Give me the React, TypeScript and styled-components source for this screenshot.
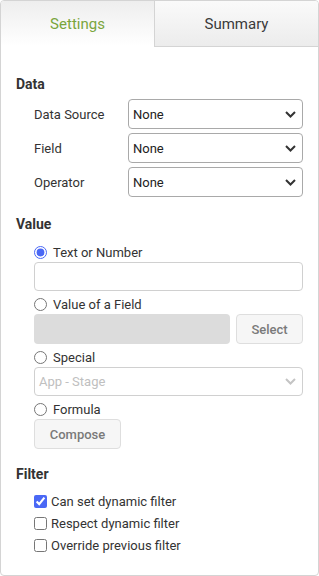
import React from 'react'
import styled, { createGlobalStyle } from 'styled-components'

const GlobalStyle = createGlobalStyle`
  body {
    margin: 0;
    background: #ffffff;
    font-family: Roboto, "Liberation Sans", Arial, sans-serif;
    color: #333;
  }
`

const Panel = styled.div`
  width: 319px;
  height: 576px;
  box-sizing: border-box;
  border: 1px solid #d4d4d4;
  border-radius: 4px;
  overflow: hidden;
  background: #fff;
`

const Tabs = styled.div`
  display: flex;
  height: 45px;
`

const Tab = styled.div<{ active?: boolean }>`
  flex: ${(p) => (p.active ? '0 0 153px' : '1')};
  display: flex;
  align-items: center;
  justify-content: center;
  font-size: 15px;
  color: ${(p) => (p.active ? '#7aa53c' : '#3a3a3a')};
  background: ${(p) =>
    p.active
      ? 'linear-gradient(#eeeeee, #ffffff)'
      : 'linear-gradient(#fafafa, #ececec)'};
  border-bottom: ${(p) => (p.active ? 'none' : '1px solid #d4d4d4')};
  border-left: ${(p) => (p.active ? 'none' : '1px solid #d4d4d4')};
  box-sizing: border-box;
  height: ${(p) => (p.active ? '45px' : '46px')};
`

const Content = styled.div`
  padding: 29px 15px 0 15px;
`

const Section = styled.div<{ after: number }>`
  margin-bottom: ${(p) => p.after}px;
`

const Heading = styled.div`
  font-size: 14px;
  font-weight: 700;
  line-height: 18px;
  color: #333;
`

const Rows = styled.div<{ gap: number; top: number }>`
  display: flex;
  flex-direction: column;
  gap: ${(p) => p.gap}px;
  padding-left: 18px;
  margin-top: ${(p) => p.top}px;
`

const FieldRow = styled.div`
  display: grid;
  grid-template-columns: 94px 1fr;
  align-items: center;
`

const Label = styled.span`
  font-size: 13px;
  color: #333;
`

const SelectBox = styled.div<{ disabled?: boolean; h?: number }>`
  height: ${(p) => p.h ?? 30}px;
  box-sizing: border-box;
  border: 1px solid ${(p) => (p.disabled ? '#d0d0d0' : '#a9a9a9')};
  border-radius: 4px;
  display: flex;
  align-items: center;
  justify-content: space-between;
  padding: 0 6px 0 4px;
  font-size: 13px;
  color: ${(p) => (p.disabled ? '#c0c0c0' : '#222')};
  background: #fff;
`

const Chevron = ({ color }: { color: string }) => (
  <svg width="11" height="7" viewBox="0 0 11 7">
    <path d="M1 1l4.5 4.5L10 1" fill="none" stroke={color} strokeWidth="2" />
  </svg>
)

const OptionGroup = styled.div`
  display: flex;
  flex-direction: column;
`

const Choice = styled.label`
  display: flex;
  align-items: center;
  height: 18px;
  font-size: 13px;
  color: #333;
  gap: 6px;

  input {
    margin: 0;
    width: 13px;
    height: 13px;
    accent-color: #4a68f5;
  }
`

const CheckChoice = styled(Choice)`
  height: 22px;
  gap: 4px;
`

const TextInput = styled.div<{ h: number }>`
  height: ${(p) => p.h}px;
  box-sizing: border-box;
  border: 1px solid #d0d0d0;
  border-radius: 4px;
  margin-top: 1px;
`

const InputGroup = styled.div`
  display: flex;
  gap: 6px;
  height: 30px;
  margin-top: 1px;
`

const GrayInput = styled.div`
  flex: 1;
  background: #dcdcdc;
  border-radius: 4px;
`

const Button = styled.div<{ w: number }>`
  width: ${(p) => p.w}px;
  box-sizing: border-box;
  height: 30px;
  display: flex;
  align-items: center;
  justify-content: center;
  background: #f6f6f6;
  border: 1px solid #dedede;
  border-radius: 4px;
  font-size: 13px;
  font-weight: 500;
  color: #7a7a7a;
`

const Spaced = styled.div`
  margin-top: 1px;
`

export default function App() {
  return (
    <>
      <GlobalStyle />
      <Panel>
        <Tabs>
          <Tab active>Settings</Tab>
          <Tab>Summary</Tab>
        </Tabs>
        <Content>
          <Section after={18}>
            <Heading>Data</Heading>
            <Rows gap={4} top={6}>
              <FieldRow>
                <Label>Data Source</Label>
                <SelectBox>
                  None <Chevron color="#333" />
                </SelectBox>
              </FieldRow>
              <FieldRow>
                <Label>Field</Label>
                <SelectBox>
                  None <Chevron color="#333" />
                </SelectBox>
              </FieldRow>
              <FieldRow>
                <Label>Operator</Label>
                <SelectBox>
                  None <Chevron color="#333" />
                </SelectBox>
              </FieldRow>
            </Rows>
          </Section>

          <Section after={16}>
            <Heading>Value</Heading>
            <Rows gap={4} top={10}>
              <OptionGroup>
                <Choice>
                  <input type="radio" name="val" defaultChecked /> Text or Number
                </Choice>
                <TextInput h={29} />
              </OptionGroup>
              <OptionGroup>
                <Choice>
                  <input type="radio" name="val" /> Value of a Field
                </Choice>
                <InputGroup>
                  <GrayInput />
                  <Button w={67}>Select</Button>
                </InputGroup>
              </OptionGroup>
              <OptionGroup>
                <Choice>
                  <input type="radio" name="val" /> Special
                </Choice>
                <Spaced>
                  <SelectBox disabled h={29}>
                    App - Stage <Chevron color="#c4c4c4" />
                  </SelectBox>
                </Spaced>
              </OptionGroup>
              <OptionGroup>
                <Choice>
                  <input type="radio" name="val" /> Formula
                </Choice>
                <Spaced>
                  <Button w={87}>Compose</Button>
                </Spaced>
              </OptionGroup>
            </Rows>
          </Section>

          <Section after={0}>
            <Heading>Filter</Heading>
            <Rows gap={0} top={7}>
              <CheckChoice>
                <input type="checkbox" defaultChecked /> Can set dynamic filter
              </CheckChoice>
              <CheckChoice>
                <input type="checkbox" /> Respect dynamic filter
              </CheckChoice>
              <CheckChoice>
                <input type="checkbox" /> Override previous filter
              </CheckChoice>
            </Rows>
          </Section>
        </Content>
      </Panel>
    </>
  )
}
